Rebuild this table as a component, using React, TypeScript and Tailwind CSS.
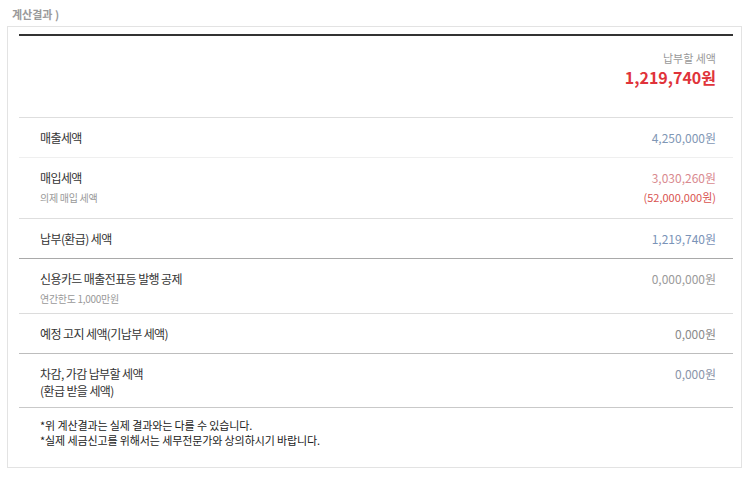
const rows = [
  { label: "매출세액", sub: "", value: "4,250,000원", extra: "", color: "text-[#7f97b5]", h: "h-[40px]", line: "border-[#efefef]" },
  { label: "매입세액", sub: "의제 매입 세액", value: "3,030,260원", extra: "(52,000,000원)", color: "text-[#d98a8f]", h: "h-[61px]", line: "border-[#dedede]" },
  { label: "납부(환급) 세액", sub: "", value: "1,219,740원", extra: "", color: "text-[#7a93b8]", h: "h-[40px]", line: "border-[#a9a9a9]" },
  { label: "신용카드 매출전표등 발행 공제", sub: "연간한도 1,000만원", value: "0,000,000원", extra: "", color: "text-[#9a9a9a]", h: "h-[55px]", line: "border-[#dcdcdc]" },
  { label: "예정 고지 세액(기납부 세액)", sub: "", value: "0,000원", extra: "", color: "text-[#8a8a8a]", h: "h-[40px]", line: "border-[#bdbdbd]" },
  { label: "차감, 가감 납부할 세액", label2: "(환급 받을 세액)", sub: "", value: "0,000원", extra: "", color: "text-[#8a94a8]", h: "h-[54px]", line: "border-[#c9c9c9]" },
];

export default function App() {
  return (
    <div
      className="w-[752px] h-[479px] bg-white px-[7px] pt-[6px] text-[#333]"
      style={{ fontFamily: '"Noto Sans CJK KR", "Noto Sans", sans-serif' }}
    >
      <div className="h-[20px] pl-[5px] text-[11px] leading-[16px] font-bold text-[#9a9a9a]">계산결과 )</div>

      <div className="h-[442px] w-[735px] border border-[#e3e3e3] pl-[11px] pr-[8px] pt-[7px]">
        {/* top summary */}
        <div className="h-[84px] border-t-2 border-[#333] border-b border-b-[#dedede] pr-[17px] pt-[15px] flex flex-col items-end">
          <span className="text-[11px] leading-[14px] text-[#999]">납부할 세액</span>
          <span className="mt-[2px] text-[16px] leading-[20px] font-bold text-[#e0333a]">1,219,740원</span>
        </div>

        {rows.map((r) => (
          <div key={r.label} className={`${r.h} border-b ${r.line} pl-[21px] pr-[17px] flex justify-between pt-[11px]`}>
            <div className="flex flex-col">
              <span className="text-[12px] leading-[17px] tracking-[-0.05em] text-[#333]">{r.label}</span>
              {r.label2 && <span className="text-[12px] leading-[17px] tracking-[-0.05em] text-[#333]">{r.label2}</span>}
              {r.sub && <span className="text-[10px] leading-[15px] mt-[4px] tracking-[-0.03em] text-[#999]">{r.sub}</span>}
            </div>
            <div className="flex flex-col items-end">
              <span className={`text-[12px] leading-[17px] ${r.color}`}>{r.value}</span>
              {r.extra && <span className="text-[11px] leading-[15px] mt-[4px] text-[#d9534f]">{r.extra}</span>}
            </div>
          </div>
        ))}

        {/* notes */}
        <div className="pl-[21px] pt-[10px] text-[11px] leading-[15px] tracking-[-0.01em] text-[#222]">
          <p>*위 계산결과는 실제 결과와는 다를 수 있습니다.</p>
          <p>*실제 세금신고를 위해서는 세무전문가와 상의하시기 바랍니다.</p>
        </div>
      </div>
    </div>
  );
}
